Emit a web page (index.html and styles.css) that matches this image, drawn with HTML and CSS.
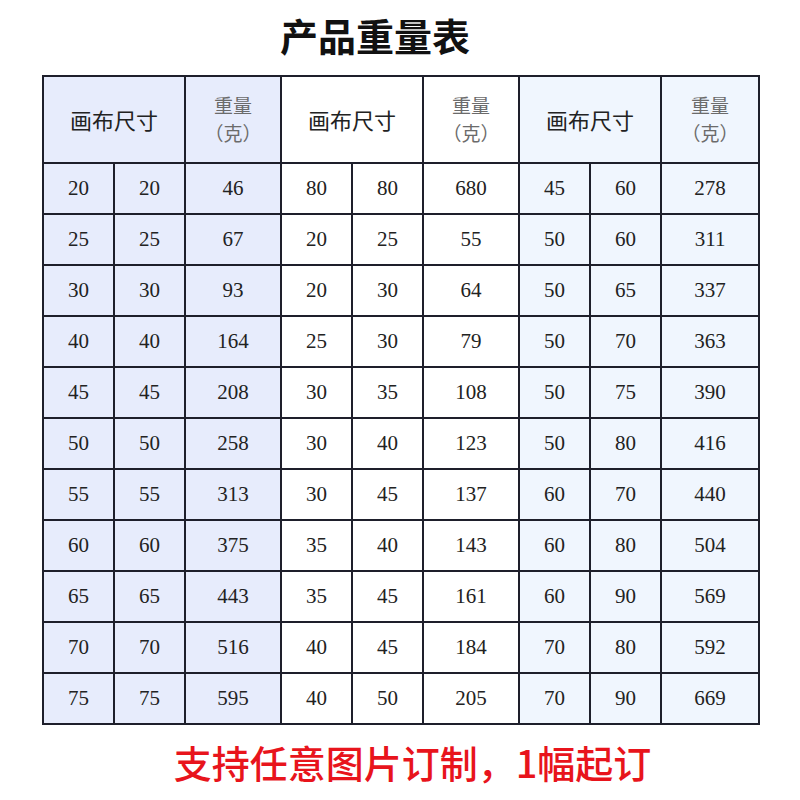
FILE: index.html
```html
<!DOCTYPE html>
<html>
<head>
<meta charset="utf-8">
<link rel="stylesheet" href="styles.css">
</head>
<body>
<div class="page">
  <h1 class="title">产品重量表</h1>
  <table class="weights">
    <colgroup>
      <col class="c-n"><col class="c-n"><col class="c-w">
      <col class="c-n"><col class="c-n"><col class="c-w">
      <col class="c-n"><col class="c-n"><col class="c-w3">
    </colgroup>
    <thead>
      <tr>
        <th colspan="2" class="g1 size">画布尺寸</th>
        <th class="g1 wt"><span class="ln">重量</span><span class="ln">（克）</span></th>
        <th colspan="2" class="g2 size">画布尺寸</th>
        <th class="g2 wt"><span class="ln">重量</span><span class="ln">（克）</span></th>
        <th colspan="2" class="g3 size">画布尺寸</th>
        <th class="g3 wt"><span class="ln">重量</span><span class="ln">（克）</span></th>
      </tr>
    </thead>
    <tbody>
      <tr><td class="g1">20</td><td class="g1">20</td><td class="g1">46</td><td class="g2">80</td><td class="g2">80</td><td class="g2">680</td><td class="g3">45</td><td class="g3">60</td><td class="g3">278</td></tr>
      <tr><td class="g1">25</td><td class="g1">25</td><td class="g1">67</td><td class="g2">20</td><td class="g2">25</td><td class="g2">55</td><td class="g3">50</td><td class="g3">60</td><td class="g3">311</td></tr>
      <tr><td class="g1">30</td><td class="g1">30</td><td class="g1">93</td><td class="g2">20</td><td class="g2">30</td><td class="g2">64</td><td class="g3">50</td><td class="g3">65</td><td class="g3">337</td></tr>
      <tr><td class="g1">40</td><td class="g1">40</td><td class="g1">164</td><td class="g2">25</td><td class="g2">30</td><td class="g2">79</td><td class="g3">50</td><td class="g3">70</td><td class="g3">363</td></tr>
      <tr><td class="g1">45</td><td class="g1">45</td><td class="g1">208</td><td class="g2">30</td><td class="g2">35</td><td class="g2">108</td><td class="g3">50</td><td class="g3">75</td><td class="g3">390</td></tr>
      <tr><td class="g1">50</td><td class="g1">50</td><td class="g1">258</td><td class="g2">30</td><td class="g2">40</td><td class="g2">123</td><td class="g3">50</td><td class="g3">80</td><td class="g3">416</td></tr>
      <tr><td class="g1">55</td><td class="g1">55</td><td class="g1">313</td><td class="g2">30</td><td class="g2">45</td><td class="g2">137</td><td class="g3">60</td><td class="g3">70</td><td class="g3">440</td></tr>
      <tr><td class="g1">60</td><td class="g1">60</td><td class="g1">375</td><td class="g2">35</td><td class="g2">40</td><td class="g2">143</td><td class="g3">60</td><td class="g3">80</td><td class="g3">504</td></tr>
      <tr><td class="g1">65</td><td class="g1">65</td><td class="g1">443</td><td class="g2">35</td><td class="g2">45</td><td class="g2">161</td><td class="g3">60</td><td class="g3">90</td><td class="g3">569</td></tr>
      <tr><td class="g1">70</td><td class="g1">70</td><td class="g1">516</td><td class="g2">40</td><td class="g2">45</td><td class="g2">184</td><td class="g3">70</td><td class="g3">80</td><td class="g3">592</td></tr>
      <tr><td class="g1">75</td><td class="g1">75</td><td class="g1">595</td><td class="g2">40</td><td class="g2">50</td><td class="g2">205</td><td class="g3">70</td><td class="g3">90</td><td class="g3">669</td></tr>
    </tbody>
  </table>
  <p class="note">支持任意图片订制，1幅起订</p>
</div>
</body>
</html>
```
FILE: styles.css
```css
html, body {
  margin: 0;
  padding: 0;
  background: #ffffff;
}
.page {
  width: 800px;
  height: 800px;
  display: flex;
  flex-direction: column;
  align-items: flex-start;
}
.title {
  margin: 0;
  width: 750px;
  height: 76px;
  display: flex;
  align-items: center;
  justify-content: center;
  padding-bottom: 4px;
  box-sizing: border-box;
  font-family: "Noto Sans CJK SC", sans-serif;
  font-weight: 700;
  font-size: 38px;
  color: #111111;
  line-height: 1;
}
.weights {
  margin-left: 42px;
  border-collapse: collapse;
  table-layout: fixed;
  width: 716px;
  border: 2px solid #1e1f2b;
}
.c-n { width: 71px; }
.c-w { width: 96px; }
.c-w3 { width: 98px; }
.weights th,
.weights td {
  border: 2px solid #1e1f2b;
  padding: 0;
  text-align: center;
  vertical-align: middle;
}
.weights th {
  height: 85px;
  font-family: "Noto Sans CJK SC", sans-serif;
  font-weight: 400;
  font-size: 22px;
  line-height: 28px;
}
.weights th.size {
  color: #222222;
}
.weights th.wt {
  color: #6b6b6b;
  font-size: 19px;
}
.ln {
  display: block;
  height: 28px;
  line-height: 28px;
}
.weights td {
  height: 49px;
  font-family: "Liberation Serif", serif;
  font-size: 21px;
  color: #222222;
}
.g1 { background: #e7ecfc; }
.g2 { background: #ffffff; }
.g3 { background: #f0f6fe; }
.note {
  margin: 0;
  width: 825px;
  height: 77px;
  display: flex;
  align-items: center;
  justify-content: center;
  font-family: "Noto Sans CJK SC", sans-serif;
  font-weight: 500;
  font-size: 38px;
  color: #e8141c;
  line-height: 1;
}
```
